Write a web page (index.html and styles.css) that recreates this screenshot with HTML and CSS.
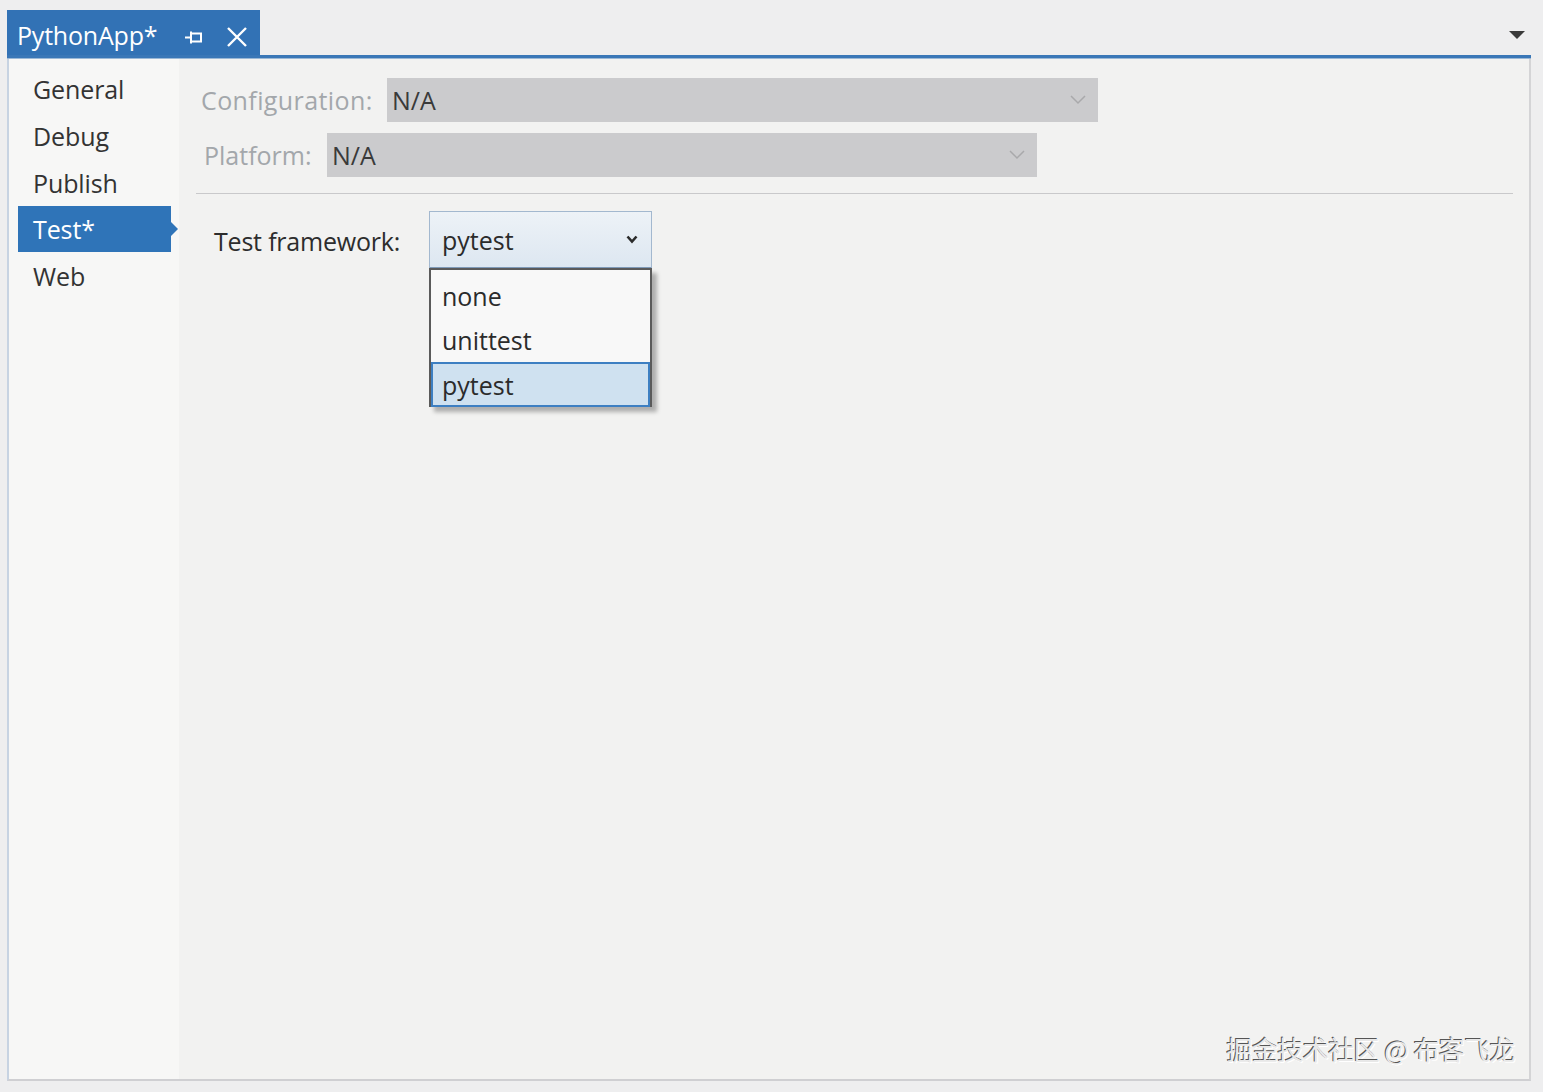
FILE: index.html
```html
<!DOCTYPE html>
<html>
<head>
<meta charset="utf-8">
<link rel="stylesheet" href="styles.css">
</head>
<body>
<div class="window">
  <div class="tabstrip">
    <div class="tab">
      <span class="tab-title">PythonApp*</span>
      <svg class="pin" width="20" height="16" viewBox="0 0 20 16"><path d="M1 8.5H7M7 2.5V14.5M7 4.5H17V12.5H7" fill="none" stroke="#fff" stroke-width="2"/></svg>
      <svg class="close" width="22" height="22" viewBox="0 0 22 22"><path d="M2 2L20 20M20 2L2 20" stroke="#fff" stroke-width="2.4"/></svg>
    </div>
    <div class="strip-fill">
      <svg class="menu-tri" width="16" height="9" viewBox="0 0 16 9"><path d="M0 0H16L8 8Z" fill="#3a3a3a"/></svg>
    </div>
  </div>
  <div class="rule"></div>
  <div class="frame">
    <nav class="nav">
      <div class="nav-item">General</div>
      <div class="nav-item">Debug</div>
      <div class="nav-item">Publish</div>
      <div class="nav-item active">Test*</div>
      <div class="nav-item">Web</div>
    </nav>
    <main class="main">
      <div class="cfg-row cfg-row1">
        <span class="cfg-label cfg-label1">Configuration:</span>
        <div class="cfg-box cfg-box1"><span>N/A</span>
          <svg width="16" height="10" viewBox="0 0 16 10"><path d="M1 1L8 8L15 1" fill="none" stroke="#a9a9ab" stroke-width="1.5"/></svg>
        </div>
      </div>
      <div class="cfg-row cfg-row2">
        <span class="cfg-label cfg-label2">Platform:</span>
        <div class="cfg-box cfg-box2"><span>N/A</span>
          <svg width="16" height="10" viewBox="0 0 16 10"><path d="M1 1L8 8L15 1" fill="none" stroke="#a9a9ab" stroke-width="1.5"/></svg>
        </div>
      </div>
      <div class="sep"></div>
      <div class="tf-row">
        <span class="tf-label">Test framework:</span>
        <div class="combo-wrap">
          <div class="combo">
            <span>pytest</span>
            <svg width="12" height="9" viewBox="0 0 12 9"><path d="M1.5 1.5L6 6.5L10.5 1.5" fill="none" stroke="#2b2b2b" stroke-width="2.6"/></svg>
          </div>
          <div class="popup">
            <div class="opt">none</div>
            <div class="opt">unittest</div>
            <div class="opt selected">pytest</div>
          </div>
        </div>
      </div>
      <div class="spacer"></div>
      <div class="watermark">掘金技术社区 @ 布客飞龙</div>
    </main>
  </div>
</div>
</body>
</html>
```
FILE: styles.css
```css
* { box-sizing: border-box; }
html, body { margin: 0; padding: 0; }
body {
  background: #eeeeef;
  font-family: "Open Sans", "Noto Sans", sans-serif;
  width: 1543px;
  height: 1092px;
  overflow: hidden;
}
.window {
  margin-left: 7px;
  padding-top: 10px;
  width: 1524px;
}
.tabstrip {
  display: flex;
  height: 45px;
}
.tab {
  width: 253px;
  background: #3272b5;
  color: #fff;
  display: flex;
  align-items: center;
  padding-left: 10px;
  padding-top: 6px;
}
.tab-title {
  font-size: 25px;
  letter-spacing: -0.2px;
  line-height: 1;
}
.pin { margin-left: 27px; margin-top: 2px; }
.close { margin-left: 22px; margin-top: 2px; }
.strip-fill {
  flex: 1;
  display: flex;
  justify-content: flex-end;
  align-items: center;
  padding-right: 6px;
  padding-top: 6px;
}
.rule {
  height: 4px;
  background: #3a77b7;
  border-bottom: 1px solid #9bb8d6;
}
.frame {
  display: flex;
  height: 1022px;
  border-left: 2px solid #c7d3e2;
  border-right: 2px solid #d4d4d6;
  border-bottom: 2px solid #cfcfd2;
}
.nav {
  width: 170px;
  background: #f7f7f6;
  padding-top: 6px;
  flex-shrink: 0;
}
.nav-item {
  height: 47px;
  display: flex;
  align-items: center;
  padding-left: 15px;
  font-size: 25px;
  color: #333;
  letter-spacing: -0.1px;
  margin-left: 9px;
}
.nav-item.active {
  background: #2f74b8;
  color: #fff;
  width: 153px;
  position: relative;
  height: 46px;
}
.nav-item.active::after {
  content: "";
  position: absolute;
  right: -7px;
  top: 16px;
  border-left: 7px solid #2f74b8;
  border-top: 7px solid transparent;
  border-bottom: 7px solid transparent;
}
.main {
  flex: 1;
  background: #f2f2f1;
  display: flex;
  flex-direction: column;
  padding-top: 19px;
}
.cfg-row {
  display: flex;
  align-items: center;
  height: 44px;
}
.cfg-row1 { padding-left: 22px; }
.cfg-row2 { padding-left: 25px; margin-top: 11px; }
.cfg-label {
  font-size: 25px;
  color: #a3a7ab;
}
.cfg-label1 { width: 186px; letter-spacing: 0.4px; }
.cfg-label2 { width: 123px; }
.cfg-box {
  height: 44px;
  background: #cbcbcd;
  display: flex;
  align-items: center;
  justify-content: space-between;
  padding: 0 12px 0 5px;
  color: #3a3a3a;
  font-size: 25px;
}
.cfg-box1 { width: 711px; }
.cfg-box2 { width: 710px; }
.sep {
  height: 1px;
  background: #c9c9cb;
  margin: 16px 16px 0 17px;
}
.tf-row {
  display: flex;
  align-items: flex-start;
  padding-left: 35px;
  margin-top: 17px;
}
.tf-label {
  font-size: 25px;
  color: #2d2d2d;
  letter-spacing: -0.2px;
  margin-top: 13px;
  width: 215px;
}
.combo-wrap {
  position: relative;
  width: 223px;
}
.combo {
  height: 58px;
  border: 1px solid #a3b8cf;
  border-bottom: 2px solid #7f9ab8;
  background: linear-gradient(#edf2f7, #dde7f1);
  display: flex;
  align-items: center;
  justify-content: space-between;
  padding: 0 13px 0 12px;
  font-size: 25px;
  color: #2b2b2b;
}
.popup {
  position: absolute;
  top: 57px;
  left: 0;
  width: 223px;
  height: 139px;
  background: #f8f8f8;
  border: 2px solid #5a5a5a;
  box-shadow: 5px 5px 4px rgba(0,0,0,0.28);
  padding-top: 4px;
  z-index: 2;
}
.opt {
  height: 44px;
  display: flex;
  align-items: center;
  padding-left: 11px;
  font-size: 25px;
  color: #2b2b2b;
}
.opt.selected {
  background: #cfe1f0;
  border: 2px solid #3d7fc2;
  padding-left: 9px;
  height: 45px;
}
.spacer { flex: 1; }
.watermark {
  align-self: flex-end;
  margin: 0 14px 12px 0;
  font-family: "Noto Sans CJK SC", sans-serif;
  font-size: 26px;
  color: #e8e8e8;
  text-shadow: -1px -1px 0 #555, 1px 1px 0 #fff;
  letter-spacing: -0.6px;
}
```
